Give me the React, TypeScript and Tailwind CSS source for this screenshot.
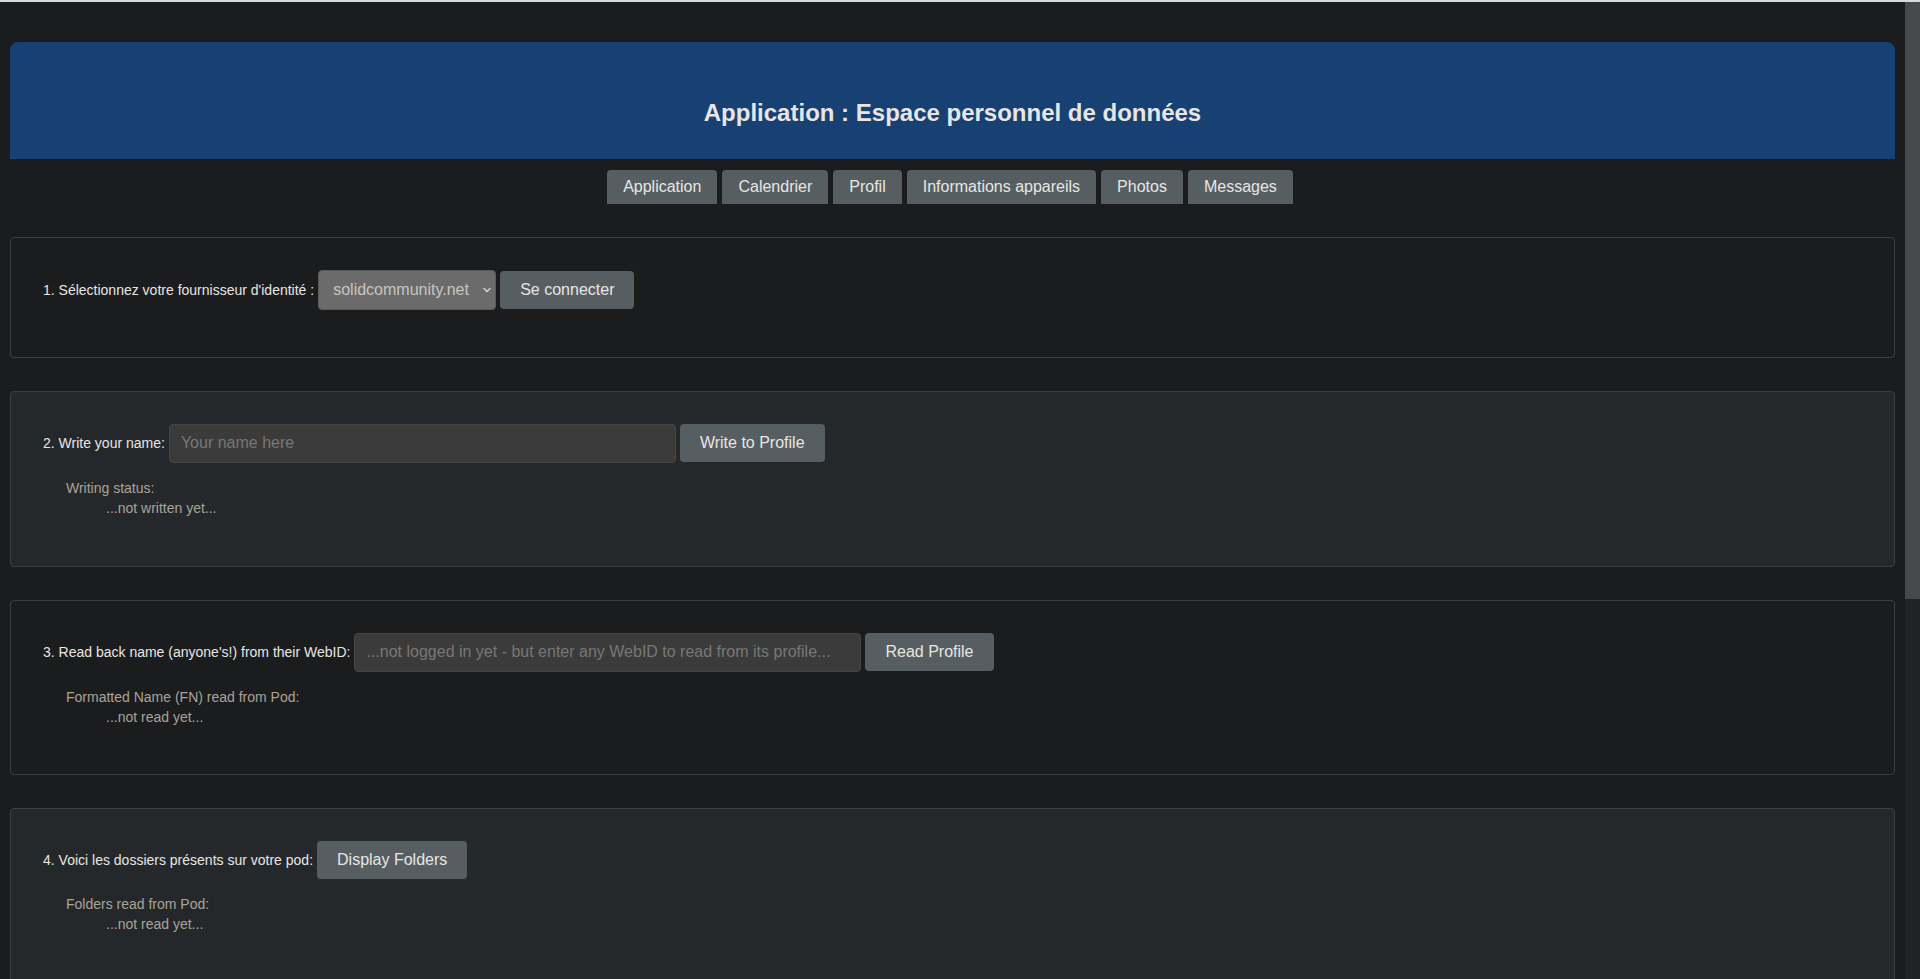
import { ChevronDown } from 'lucide-react';

const tabs = ['Application', 'Calendrier', 'Profil', 'Informations appareils', 'Photos', 'Messages'];

function Status({ title, value }: { title: string; value: string }) {
    return (
        <div className="mt-[15px] ml-[23px] text-[14px] leading-[20px] text-[#aaa398]">
            <div>{title}</div>
            <div className="ml-[40px]">{value}</div>
        </div>
    );
}

function Button({ children }: { children: React.ReactNode }) {
    return (
        <button className="h-[38px] px-5 rounded-[4px] bg-[#575e62] text-[16px] text-[#e8e6e3]">
            {children}
        </button>
    );
}

export default function App() {
    return (
        <div className="h-screen overflow-hidden flex flex-col bg-[#1b1c1e] font-['Liberation_Sans',Arial,sans-serif]">
            <div className="h-[2px] bg-[#d8d8d8] shrink-0"></div>
            <div className="flex flex-1 min-h-0">
                <main className="flex-1 overflow-hidden px-[10px] pt-[40px]">
                    {/* Header */}
                    <header className="h-[117px] pt-[57px] rounded-t-[8px] bg-[#174073] text-center">
                        <h1 className="text-[24px] leading-[28px] font-bold text-[#e8e6e3]">
                            Application : Espace personnel de données
                        </h1>
                    </header>

                    {/* Tabs */}
                    <nav className="mt-[11px] pr-[5px] flex justify-center gap-[5px]">
                        {tabs.map(t => (
                            <button key={t} className="h-[34px] px-4 rounded-t-[4px] bg-[#575e62] text-[16px] text-[#e8e6e3]">
                                {t}
                            </button>
                        ))}
                    </nav>

                    {/* 1 */}
                    <section className="mt-[33px] border border-[#3b3f42] rounded-[4px] pl-[32px] pt-[32px] pb-[47px]">
                        <div className="flex items-center gap-1 h-[40px]">
                            <span className="text-[14px] text-[#e8e6e3]">1. Sélectionnez votre fournisseur d'identité :</span>
                            <div className="relative">
                                <select className="appearance-none w-[178px] h-[40px] pl-[14px] pr-[22px] rounded-[4px] border border-[#5a5a5a] bg-[#6b6b6b] text-[16px] text-[#c9c5bf]">
                                    <option>solidcommunity.net</option>
                                </select>
                                <ChevronDown className="absolute right-[3px] top-[14px] w-[12px] h-[12px] text-[#d0d0d0] pointer-events-none" strokeWidth={3} />
                            </div>
                            <Button>Se connecter</Button>
                        </div>
                    </section>

                    {/* 2 */}
                    <section className="mt-[33px] border border-[#3b3f42] rounded-[4px] bg-[#25282b] pl-[32px] pt-[31px] pb-[48px]">
                        <div className="flex items-center gap-1 h-[40px]">
                            <span className="text-[14px] text-[#e8e6e3]">2. Write your name:</span>
                            <input
                                placeholder="Your name here"
                                className="w-[507px] h-[39px] px-[11px] rounded-[4px] border border-[#464646] bg-[#3b3b3b] text-[16px] text-[#e8e6e3] placeholder:text-[#777777] outline-none"
                            />
                            <Button>Write to Profile</Button>
                        </div>
                        <Status title="Writing status:" value="...not written yet..." />
                    </section>

                    {/* 3 */}
                    <section className="mt-[33px] border border-[#3b3f42] rounded-[4px] pl-[32px] pt-[31px] pb-[47px]">
                        <div className="flex items-center gap-1 h-[40px]">
                            <span className="text-[14px] text-[#e8e6e3]">3. Read back name (anyone's!) from their WebID:</span>
                            <input
                                placeholder="...not logged in yet - but enter any WebID to read from its profile..."
                                className="w-[507px] h-[39px] px-[11px] rounded-[4px] border border-[#464646] bg-[#3b3b3b] text-[16px] text-[#e8e6e3] placeholder:text-[#777777] outline-none"
                            />
                            <Button>Read Profile</Button>
                        </div>
                        <Status title="Formatted Name (FN) read from Pod:" value="...not read yet..." />
                    </section>

                    {/* 4 */}
                    <section className="mt-[33px] border border-[#3b3f42] rounded-[4px] bg-[#25282b] pl-[32px] pt-[32px] pb-[48px]">
                        <div className="flex items-center gap-1 h-[38px]">
                            <span className="text-[14px] text-[#e8e6e3]">4. Voici les dossiers présents sur votre pod:</span>
                            <Button>Display Folders</Button>
                        </div>
                        <Status title="Folders read from Pod:" value="...not read yet..." />
                    </section>
                </main>

                {/* Scrollbar */}
                <div className="w-[15px] shrink-0 bg-[#202325]">
                    <div className="h-[597px] bg-[#45494c]"></div>
                </div>
            </div>
        </div>
    );
}
